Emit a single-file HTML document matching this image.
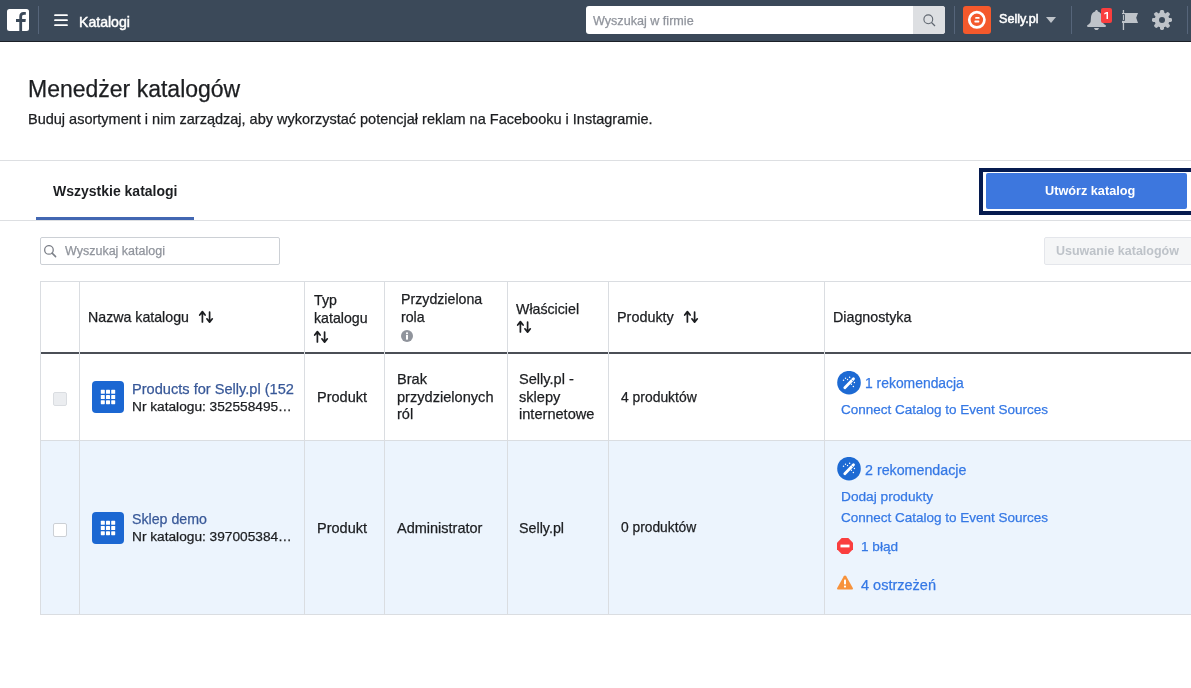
<!DOCTYPE html>
<html><head><meta charset="utf-8">
<style>
*{margin:0;padding:0;box-sizing:border-box}
html,body{width:1191px;height:688px;overflow:hidden;background:#fff}
body{position:relative;font-family:"Liberation Sans",sans-serif;color:#1c1e21}
.a{position:absolute;white-space:nowrap;line-height:1}
body{-webkit-font-smoothing:antialiased}
.a{-webkit-text-stroke:0.25px currentColor}
.a{will-change:transform}
.hdr{position:absolute;left:0;top:0;width:1191px;height:41px;background:#3b4959}
.hdrline{position:absolute;left:0;top:41px;width:1191px;height:1px;background:#1b2027}
.vl{position:absolute;width:1px;background:#56657a}
.hl{position:absolute;height:1px;background:#dddfe2}
.tb{position:absolute;background:#dadde1}
.lnk{color:#385898}
.dg{color:#3578e5}
</style></head><body>
<!-- HEADER -->
<div class="hdr"></div>
<div class="hdrline"></div>
<!-- fb logo -->
<svg class="a" style="left:7px;top:9px" width="22" height="22" viewBox="0 0 22 22">
<rect x="0" y="0" width="22" height="22" rx="2.5" fill="#fff"/>
<path d="M12.3 22V12.9H9V10H12.3V7.6C12.3 4.8 13.8 3.1 16.6 3.1H18.8V5.8H17.2C15.6 5.8 15.1 6.6 15.1 7.8V10H18.8L18.5 12.9H15.1V22Z" fill="#3b4959"/>
</svg>
<div class="vl" style="left:38px;top:6px;height:28px"></div>
<!-- hamburger -->
<svg class="a" style="left:52px;top:12px" width="18" height="16" viewBox="0 0 18 16"><path d="M3 3.2H15M3 8.2H15M3 13.2H15" stroke="#fff" stroke-width="1.8" stroke-linecap="round"/></svg>
<div class="a" style="left:79px;top:15px;font-size:14.1px;-webkit-text-stroke:0.45px #fff;color:#fff">Katalogi</div>
<!-- search -->
<div class="a" style="left:586px;top:6px;width:359px;height:28px;background:#fff;border-radius:3px"></div>
<div class="a" style="left:913px;top:6px;width:32px;height:28px;background:#dddfe2;border-radius:0 3px 3px 0"></div>
<svg class="a" style="left:923px;top:14px" width="13" height="13" viewBox="0 0 13 13"><circle cx="5.3" cy="5.3" r="4.4" fill="none" stroke="#606770" stroke-width="1.1"/><path d="M8.5 8.5L12 12" stroke="#606770" stroke-width="1.3"/></svg>
<div class="a" style="left:593px;top:15px;font-size:12.6px;color:#90949c">Wyszukaj w firmie</div>
<div class="vl" style="left:954px;top:6px;height:28px"></div>
<!-- avatar -->
<div class="a" style="left:963px;top:6px;width:28px;height:28px;background:#f4592c;border-radius:3px"></div>
<svg class="a" style="left:963px;top:6px" width="28" height="28" viewBox="0 0 28 28"><circle cx="13.85" cy="13.8" r="7.6" fill="none" stroke="#fff" stroke-width="2.7"/><rect x="12.2" y="11.1" width="4.4" height="1.7" rx=".6" fill="#fff"/><rect x="11.4" y="14.6" width="4.9" height="1.8" rx=".6" fill="#fff"/></svg>
<div class="a" style="left:999px;top:12.5px;font-size:12.6px;-webkit-text-stroke:0.5px #fff;color:#fff">Selly.pl</div>
<svg class="a" style="left:1046px;top:17px" width="10" height="6" viewBox="0 0 10 6"><path d="M0 0H10L5 6z" fill="#bec3c9"/></svg>
<div class="vl" style="left:1071px;top:6px;height:28px"></div>
<!-- bell -->
<svg class="a" style="left:1086.5px;top:9px" width="20" height="22" viewBox="0 0 20 22"><path d="M9.5 0.9C10.3 0.9 10.8 1.5 10.9 2.4C13.4 3.2 14.8 5.2 15 8L15.3 12.3C15.5 14 16.6 15 18.4 16C19.3 16.5 19.2 17.9 18 17.9H1C-.2 17.9-.3 16.5 .6 16C2.4 15 3.5 14 3.7 12.3L4 8C4.2 5.2 5.6 3.2 8.1 2.4C8.2 1.5 8.7 .9 9.5 .9Z M7 19H12C11.7 20.3 10.8 21.1 9.5 21.1S7.3 20.3 7 19Z" fill="#bec3c9"/></svg>
<div class="a" style="left:1101px;top:8px;width:11px;height:15px;background:#fa3e3e;border-radius:2px"></div>
<svg class="a" style="left:1101px;top:8px" width="11" height="15" viewBox="0 0 11 15"><path d="M5.5 3.9H7V10.9H5.5V5.6L3.3 6.5V5.1z" fill="#fff"/></svg>
<!-- flag -->
<svg class="a" style="left:1121px;top:9px" width="19" height="22" viewBox="0 0 19 22"><rect x="1.8" y="1" width="1.3" height="20" fill="#bec3c9"/><path d="M1 4H17L15.2 8.8 17 14H1z" fill="#bec3c9"/><rect x="1.5" y="5.6" width="2" height="5.8" fill="none" stroke="#3b4959" stroke-width="0.9"/></svg>
<!-- gear -->
<svg class="a" style="left:1152px;top:10px" width="20" height="20" viewBox="-10 -10 20 20"><g fill="#bec3c9"><circle r="7.4"/><rect x="-2" y="-10" width="4" height="5" rx="1.4" transform="rotate(0)"/><rect x="-2" y="-10" width="4" height="5" rx="1.4" transform="rotate(45)"/><rect x="-2" y="-10" width="4" height="5" rx="1.4" transform="rotate(90)"/><rect x="-2" y="-10" width="4" height="5" rx="1.4" transform="rotate(135)"/><rect x="-2" y="-10" width="4" height="5" rx="1.4" transform="rotate(180)"/><rect x="-2" y="-10" width="4" height="5" rx="1.4" transform="rotate(225)"/><rect x="-2" y="-10" width="4" height="5" rx="1.4" transform="rotate(270)"/><rect x="-2" y="-10" width="4" height="5" rx="1.4" transform="rotate(315)"/><rect x="-2.3" y="-8.5" width="4.6" height="3" transform="rotate(0)"/></g><circle r="3" fill="#3b4959"/></svg>
<div class="vl" style="left:1187px;top:6px;height:28px"></div>

<!-- TITLE -->
<div class="a" style="left:28px;top:78px;font-size:23px;color:#1c1e21">Menedżer katalogów</div>
<div class="a" style="left:28px;top:112px;font-size:14.5px;color:#1c1e21">Buduj asortyment i nim zarządzaj, aby wykorzystać potencjał reklam na Facebooku i Instagramie.</div>
<div class="hl" style="left:0;top:160px;width:1191px"></div>
<!-- tab -->
<div class="a" style="left:53px;top:184px;font-size:14px;font-weight:bold;-webkit-text-stroke:0;color:#1c1e21">Wszystkie katalogi</div>
<div class="a" style="left:36px;top:217px;width:158px;height:3px;background:#4267b2"></div>
<div class="hl" style="left:0;top:220px;width:1191px"></div>
<!-- create button -->
<div class="a" style="left:979px;top:168px;width:216px;height:47px;background:#061b4f"></div>
<div class="a" style="left:983px;top:172px;width:210px;height:39px;background:#fff"></div>
<div class="a" style="left:986px;top:173px;width:201px;height:36px;background:#3d77de;border-radius:2px"></div>
<div class="a" style="left:1045px;top:185px;font-size:12.7px;font-weight:bold;-webkit-text-stroke:0;color:#fff">Utwórz katalog</div>

<!-- search catalogs -->
<div class="a" style="left:40px;top:237px;width:240px;height:28px;border:1px solid #ccd0d5;border-radius:2px"></div>
<svg class="a" style="left:44px;top:245px" width="13" height="13" viewBox="0 0 13 13"><circle cx="4.95" cy="4.9" r="4.3" fill="none" stroke="#7d8189" stroke-width="1.3"/><path d="M8.1 8.1L11.6 11.6" stroke="#7d8189" stroke-width="1.5" stroke-linecap="round"/></svg>
<div class="a" style="left:65px;top:245px;font-size:12.5px;color:#90949c">Wyszukaj katalogi</div>
<!-- delete button -->
<div class="a" style="left:1044px;top:237px;width:160px;height:28px;background:#f5f6f7;border:1px solid #e4e6eb;border-radius:2px"></div>
<div class="a" style="left:1056px;top:245px;font-size:12.5px;font-weight:bold;-webkit-text-stroke:0;color:#bec3c9">Usuwanie katalogów</div>

<!-- TABLE -->
<div class="a" style="left:40px;top:441px;width:1151px;height:173px;background:#ecf4fd"></div>
<div class="tb" style="left:40px;top:281px;width:1151px;height:1px"></div>
<div class="a" style="left:40px;top:352px;width:1151px;height:2px;background:#4b4f56"></div>
<div class="tb" style="left:40px;top:440px;width:1151px;height:1px"></div>
<div class="tb" style="left:40px;top:614px;width:1151px;height:1px"></div>
<div class="tb" style="left:40px;top:281px;width:1px;height:334px"></div>
<div class="tb" style="left:79px;top:281px;width:1px;height:334px"></div>
<div class="tb" style="left:304px;top:281px;width:1px;height:334px"></div>
<div class="tb" style="left:384px;top:281px;width:1px;height:334px"></div>
<div class="tb" style="left:507px;top:281px;width:1px;height:334px"></div>
<div class="tb" style="left:608px;top:281px;width:1px;height:334px"></div>
<div class="tb" style="left:824px;top:281px;width:1px;height:334px"></div>

<!-- header cells -->
<div class="a" style="left:88px;top:310px;font-size:14.2px">Nazwa katalogu</div>
<div class="a" style="left:313.5px;top:291.5px;font-size:14.2px;line-height:17.7px">Typ<br>katalogu</div>
<div class="a" style="left:401px;top:290.5px;font-size:14.2px;line-height:17.7px">Przydzielona<br>rola</div>
<div class="a" style="left:516px;top:302px;font-size:14.2px">Właściciel</div>
<div class="a" style="left:617px;top:310px;font-size:14.4px">Produkty</div>
<div class="a" style="left:832.5px;top:310px;font-size:14.25px">Diagnostyka</div>


<!-- sort arrows -->
<svg class="a" style="left:198px;top:310px" width="16" height="14" viewBox="0 0 16 14"><path d="M4.4 1.8V11.9 M1.7 5L4.4 1.6 7.1 5 M11.6 2V12.1 M8.9 8.8L11.6 12.2 14.3 8.8" fill="none" stroke="#1c1e21" stroke-width="1.7" stroke-linecap="round" stroke-linejoin="round"/></svg>
<svg class="a" style="left:312.7px;top:330.3px" width="16" height="14" viewBox="0 0 16 14"><path d="M4.4 1.8V11.9 M1.7 5L4.4 1.6 7.1 5 M11.6 2V12.1 M8.9 8.8L11.6 12.2 14.3 8.8" fill="none" stroke="#1c1e21" stroke-width="1.7" stroke-linecap="round" stroke-linejoin="round"/></svg>
<svg class="a" style="left:516px;top:320.2px" width="16" height="14" viewBox="0 0 16 14"><path d="M4.4 1.8V11.9 M1.7 5L4.4 1.6 7.1 5 M11.6 2V12.1 M8.9 8.8L11.6 12.2 14.3 8.8" fill="none" stroke="#1c1e21" stroke-width="1.7" stroke-linecap="round" stroke-linejoin="round"/></svg>
<svg class="a" style="left:683px;top:310.2px" width="16" height="14" viewBox="0 0 16 14"><path d="M4.4 1.8V11.9 M1.7 5L4.4 1.6 7.1 5 M11.6 2V12.1 M8.9 8.8L11.6 12.2 14.3 8.8" fill="none" stroke="#1c1e21" stroke-width="1.7" stroke-linecap="round" stroke-linejoin="round"/></svg>
<!-- info icon -->
<svg class="a" style="left:401px;top:330px" width="12" height="12" viewBox="0 0 12 12"><circle cx="6" cy="6" r="6" fill="#90949c"/><circle cx="6" cy="3.3" r="1.1" fill="#fff"/><rect x="5" y="5" width="2" height="4.6" fill="#fff"/></svg>

<!-- ROW 1 -->
<div class="a" style="left:53px;top:392px;width:14px;height:14px;background:#ebedf0;border:1px solid #dadde1;border-radius:2px"></div>
<svg class="a" style="left:92px;top:381px" width="32" height="32" viewBox="0 0 32 32"><rect width="32" height="32" rx="4" fill="#1b67d2"/><g fill="#fff"><rect x="8.8" y="8.8" width="4" height="4" rx="0.6"/><rect x="14.0" y="8.8" width="4" height="4" rx="0.6"/><rect x="19.2" y="8.8" width="4" height="4" rx="0.6"/><rect x="8.8" y="14.0" width="4" height="4" rx="0.6"/><rect x="14.0" y="14.0" width="4" height="4" rx="0.6"/><rect x="19.2" y="14.0" width="4" height="4" rx="0.6"/><rect x="8.8" y="19.2" width="4" height="4" rx="0.6"/><rect x="14.0" y="19.2" width="4" height="4" rx="0.6"/><rect x="19.2" y="19.2" width="4" height="4" rx="0.6"/></g></svg>
<div class="a" style="left:132px;top:382px;width:162px;overflow:hidden;font-size:14.6px;color:#385898">Products for Selly.pl (1527)</div>
<div class="a" style="left:132px;top:400px;font-size:13.7px">Nr katalogu: 352558495…</div>
<div class="a" style="left:317px;top:390px;font-size:14.5px">Produkt</div>
<div class="a" style="left:397px;top:371.3px;font-size:14.6px;line-height:17.6px">Brak<br>przydzielonych<br>ról</div>
<div class="a" style="left:519px;top:371.3px;font-size:14.6px;line-height:17.6px">Selly.pl -<br>sklepy<br>internetowe</div>
<div class="a" style="left:621px;top:391px;font-size:13.9px">4 produktów</div>
<svg class="a wand" style="left:837px;top:371px" width="24" height="24" viewBox="0 0 24 24"><circle cx="12" cy="11.7" r="11.8" fill="#1d6ad3"/><path d="M7.8 16.8L16.5 7.8" stroke="#fff" stroke-width="2.8" stroke-linecap="round"/><path d="M14.6 8.6L15.9 9.9" stroke="#1d6ad3" stroke-width="0.7"/><g fill="#fff"><circle cx="6.5" cy="9.3" r=".75"/><circle cx="8.5" cy="7.3" r=".7"/><circle cx="10.5" cy="8.5" r=".7"/><circle cx="12.6" cy="6.2" r=".75"/><circle cx="17.4" cy="11.5" r=".7"/><circle cx="14.4" cy="13.3" r=".7"/><circle cx="16.4" cy="15.4" r=".75"/></g></svg>
<div class="a dg" style="left:865px;top:377px;font-size:13.9px">1 rekomendacja</div>
<div class="a dg" style="left:841px;top:403px;font-size:13.5px">Connect Catalog to Event Sources</div>

<!-- ROW 2 -->
<div class="a" style="left:53px;top:523px;width:14px;height:14px;background:#fff;border:1px solid #ccd0d5;border-radius:2px"></div>
<svg class="a" style="left:92px;top:512px" width="32" height="32" viewBox="0 0 32 32"><rect width="32" height="32" rx="4" fill="#1b67d2"/><g fill="#fff"><rect x="8.8" y="8.8" width="4" height="4" rx="0.6"/><rect x="14.0" y="8.8" width="4" height="4" rx="0.6"/><rect x="19.2" y="8.8" width="4" height="4" rx="0.6"/><rect x="8.8" y="14.0" width="4" height="4" rx="0.6"/><rect x="14.0" y="14.0" width="4" height="4" rx="0.6"/><rect x="19.2" y="14.0" width="4" height="4" rx="0.6"/><rect x="8.8" y="19.2" width="4" height="4" rx="0.6"/><rect x="14.0" y="19.2" width="4" height="4" rx="0.6"/><rect x="19.2" y="19.2" width="4" height="4" rx="0.6"/></g></svg>
<div class="a" style="left:132px;top:512px;font-size:14.2px;color:#385898">Sklep demo</div>
<div class="a" style="left:132px;top:530px;font-size:13.7px">Nr katalogu: 397005384…</div>
<div class="a" style="left:317px;top:521px;font-size:14.5px">Produkt</div>
<div class="a" style="left:397px;top:521px;font-size:14.5px">Administrator</div>
<div class="a" style="left:519px;top:521px;font-size:14.3px">Selly.pl</div>
<div class="a" style="left:621px;top:521px;font-size:13.8px">0 produktów</div>
<svg class="a wand" style="left:837px;top:457px" width="24" height="24" viewBox="0 0 24 24"><circle cx="12" cy="11.7" r="11.8" fill="#1d6ad3"/><path d="M7.8 16.8L16.5 7.8" stroke="#fff" stroke-width="2.8" stroke-linecap="round"/><path d="M14.6 8.6L15.9 9.9" stroke="#1d6ad3" stroke-width="0.7"/><g fill="#fff"><circle cx="6.5" cy="9.3" r=".75"/><circle cx="8.5" cy="7.3" r=".7"/><circle cx="10.5" cy="8.5" r=".7"/><circle cx="12.6" cy="6.2" r=".75"/><circle cx="17.4" cy="11.5" r=".7"/><circle cx="14.4" cy="13.3" r=".7"/><circle cx="16.4" cy="15.4" r=".75"/></g></svg>
<div class="a dg" style="left:865px;top:463px;font-size:14.25px">2 rekomendacje</div>
<div class="a dg" style="left:841px;top:490px;font-size:13.7px">Dodaj produkty</div>
<div class="a dg" style="left:841px;top:511px;font-size:13.5px">Connect Catalog to Event Sources</div>
<svg class="a" style="left:837px;top:538px" width="16" height="16" viewBox="0 0 16 16"><path d="M4.7 0h6.6L16 4.7v6.6L11.3 16H4.7L0 11.3V4.7z" fill="#fa3e3e"/><rect x="3.5" y="6.6" width="9" height="2.8" fill="#fff"/></svg>
<div class="a dg" style="left:861px;top:540px;font-size:13.6px">1 błąd</div>
<svg class="a" style="left:837px;top:575px" width="16" height="15" viewBox="0 0 16 15"><path d="M8 0.5c.5 0 .9.3 1.2.8l6.6 11.6c.4.8-.1 1.6-1 1.6H1.2c-.9 0-1.4-.8-1-1.6L6.8 1.3C7.1.8 7.5.5 8 .5z" fill="#f7923b"/><rect x="7" y="4.5" width="2" height="5" rx=".8" fill="#fff"/><circle cx="8" cy="11.6" r="1.1" fill="#fff"/></svg>
<div class="a dg" style="left:861px;top:578px;font-size:14.5px">4 ostrzeżeń</div>

</body></html>
